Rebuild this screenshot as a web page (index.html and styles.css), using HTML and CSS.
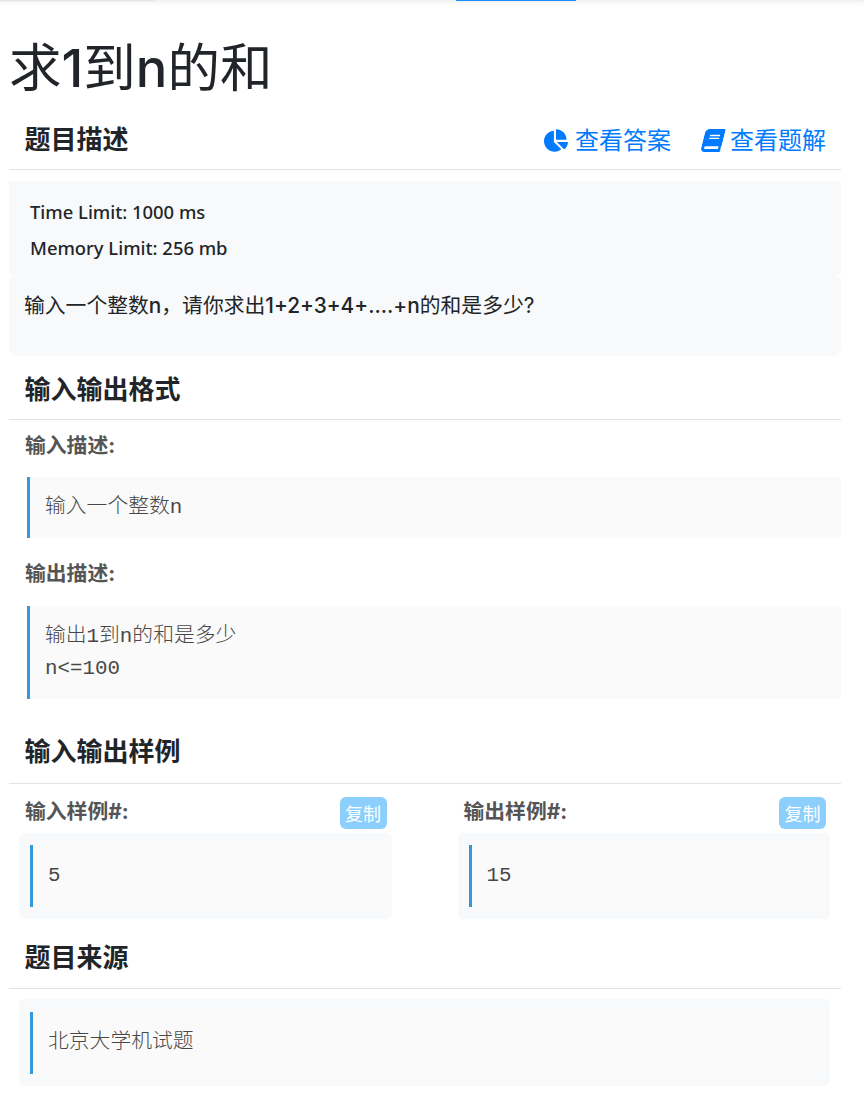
FILE: index.html
```html
<!DOCTYPE html>
<html lang="zh-CN">
<head>
<meta charset="utf-8">
<title>求1到n的和</title>
<link rel="stylesheet" href="styles.css">
</head>
<body>
<nav class="topbar">
  <span class="topbar-left"></span>
  <span class="topbar-tab"></span>
</nav>
<main class="page">
  <h1 class="title">求<span class="latin">1</span>到<span class="latin">n</span>的和</h1>

  <header class="section-head head-desc">
    <h2 class="section-title">题目描述</h2>
    <div class="actions">
      <a class="action" href="#">
        <svg class="icon" viewBox="0 0 544 512" aria-hidden="true"><path d="M527.79 288H290.5l158.03 158.03c6.04 6.04 15.98 6.53 22.19 .68 38.7-36.46 65.32-85.61 73.13-140.86 1.34-9.46-6.51-17.85-16.06-17.85zm-15.83-64.8C503.72 103.74 408.26 8.28 288.8 .04 279.68-.59 272 7.1 272 16.24V240h223.77c9.14 0 16.82-7.68 16.19-16.8zM224 288V50.71c0-9.55-8.39-17.4-17.84-16.06C86.99 51.49-4.1 155.6 .14 280.37 4.5 408.51 114.83 513.59 243.03 511.98c50.4-.63 96.97-16.87 135.26-44.03 7.9-5.6 8.42-17.23 1.57-24.08L224 288z"/></svg>
        查看答案
      </a>
      <a class="action" href="#">
        <svg class="icon icon-book" viewBox="0 0 448 512" aria-hidden="true"><path d="M448 360V24c0-13.3-10.7-24-24-24H96C43 0 0 43 0 96v320c0 53 43 96 96 96h328c13.3 0 24-10.7 24-24v-16c0-7.5-3.5-14.3-8.9-18.7-4.2-15.4-4.2-59.3 0-74.7 5.4-4.3 8.9-11.1 8.9-18.6zM128 134c0-3.3 2.7-6 6-6h212c3.3 0 6 2.7 6 6v20c0 3.3-2.7 6-6 6H134c-3.3 0-6-2.7-6-6v-20zm0 64c0-3.3 2.7-6 6-6h212c3.3 0 6 2.7 6 6v20c0 3.3-2.7 6-6 6H134c-3.3 0-6-2.7-6-6v-20zm253.4 250H96c-17.7 0-32-14.3-32-32 0-17.6 14.4-32 32-32h285.4c-1.9 17.1-1.9 46.9 0 64z"/></svg>
        查看题解
      </a>
    </div>
  </header>

  <section class="limits">
    <p>Time Limit: 1000 ms</p>
    <p>Memory Limit: 256 mb</p>
  </section>
  <section class="statement">输入一个整数<span class="latin">n</span>，请你求出<span class="latin">1+2+3+4+....+n</span>的和是多少?</section>

  <header class="section-head head-format">
    <h2 class="section-title">输入输出格式</h2>
  </header>
  <h3 class="label label-first">输入描述:</h3>
  <blockquote class="quote quote-wide">输入一个整数n</blockquote>
  <h3 class="label label-second">输出描述:</h3>
  <blockquote class="quote quote-wide quote-tall">输出1到n的和是多少<br>n&lt;=100</blockquote>

  <header class="section-head head-samples">
    <h2 class="section-title">输入输出样例</h2>
  </header>
  <div class="samples">
    <div class="sample">
      <div class="sample-head">
        <h3 class="label">输入样例#:</h3>
        <button class="copy" type="button">复制</button>
      </div>
      <div class="panel"><blockquote class="quote">5</blockquote></div>
    </div>
    <div class="sample">
      <div class="sample-head">
        <h3 class="label">输出样例#:</h3>
        <button class="copy" type="button">复制</button>
      </div>
      <div class="panel"><blockquote class="quote">15</blockquote></div>
    </div>
  </div>

  <header class="section-head head-source">
    <h2 class="section-title">题目来源</h2>
  </header>
  <div class="panel panel-source"><blockquote class="quote">北京大学机试题</blockquote></div>
</main>
</body>
</html>
```

FILE: styles.css
```css
* {
  box-sizing: border-box;
}

html,
body {
  margin: 0;
  padding: 0;
  background: #fff;
}

body {
  color: #212529;
  font-family: Inter, "Noto Sans CJK SC", sans-serif;
}

.latin {
  font-weight: 500;
}

.topbar {
  display: flex;
  height: 2px;
  background: #f2f2f4;
  box-shadow: 0 1px 4px rgba(0, 0, 0, 0.07);
}

.topbar-left {
  width: 154px;
  height: 1px;
  background: #e2e4ea;
}

.topbar-tab {
  width: 120px;
  height: 1px;
  margin-left: 302px;
  background: #1890ff;
}

.page {
  padding: 0 23px 0 9px;
}

.title {
  margin: 0;
  height: 112px;
  padding-top: 30px;
  font-size: 52.5px;
  font-weight: 400;
  line-height: 72px;
}

.section-head {
  display: flex;
  align-items: center;
  justify-content: space-between;
  height: 56px;
  padding: 0 15px 0 15.5px;
  border-bottom: 1px solid #e4e4e4;
}

.head-desc {
  padding-bottom: 4px;
}

.section-title {
  margin: 0;
  font-size: 26px;
  font-weight: 700;
  line-height: 36px;
  color: #212529;
}

.actions {
  display: flex;
  gap: 30px;
  padding-top: 2px;
}

.action {
  display: flex;
  align-items: center;
  gap: 7px;
  font-size: 24px;
  line-height: 36px;
  color: #007bff;
  text-decoration: none;
}

.icon {
  display: block;
  width: 24px;
  height: 23px;
  fill: #007bff;
}

.icon-book {
  width: 20px;
  margin-left: 2px;
  transform: skewX(-14deg);
}

.limits {
  margin-top: 11px;
  height: 94px;
  padding: 13px 21px 0;
  background: #f8f9fa;
  font-family: "Noto Sans", "Noto Sans CJK SC", sans-serif;
  font-size: 18.4px;
  font-weight: 500;
  line-height: 36px;
}

.limits p {
  margin: 0;
}

.statement {
  height: 81px;
  padding: 15px;
  background: #f8f9fa;
  border-radius: 8px;
  font-size: 20.8px;
  line-height: 32px;
}

.head-format {
  height: 64px;
  padding-top: 4px;
}

.label {
  margin: 0;
  font-size: 20.8px;
  font-weight: 700;
  line-height: 32px;
  color: #555;
}

.label-first {
  margin: 10px 0 0 16px;
}

.label-second {
  margin: 20px 0 0 16px;
}

.quote {
  margin: 0;
  padding: 15px;
  background: #fafafa;
  border-left: 3px solid #3498db;
  border-radius: 0 3px 3px 0;
  color: #484848;
  font-family: "Liberation Mono", "Noto Sans CJK SC", monospace;
  font-size: 20.8px;
  font-weight: 300;
  line-height: 32px;
}

.quote-wide {
  margin: 15px 0 0 18px;
  height: 61px;
}

.quote-tall {
  height: 93px;
  margin-top: 16px;
}

.head-samples {
  height: 85px;
  padding-top: 24px;
  padding-bottom: 3px;
}

.samples {
  display: grid;
  grid-template-columns: 1fr 1fr;
  gap: 66px;
  padding: 13px 11px 0 10px;
}

.sample-head {
  display: flex;
  align-items: flex-start;
  justify-content: space-between;
  height: 36px;
  padding: 0 5px 0 6px;
}

.sample:last-child .sample-head {
  padding-right: 4px;
}

.sample-head .label {
  line-height: 30px;
}

.copy {
  width: 47px;
  height: 32px;
  padding: 0;
  border: 0;
  border-radius: 6px;
  background: #8ccffc;
  color: #fff;
  font-family: "Noto Sans CJK SC", sans-serif;
  font-size: 18px;
  line-height: 32px;
}

.panel {
  height: 86px;
  padding: 12px 11px;
  background: #f8f9fa;
  border-radius: 6px;
}

.panel .quote {
  height: 62px;
}

.head-source {
  height: 70px;
  padding-top: 9px;
}

.panel-source {
  margin: 10px 11px 0 10px;
  height: 87px;
  padding-top: 13px;
}
```
